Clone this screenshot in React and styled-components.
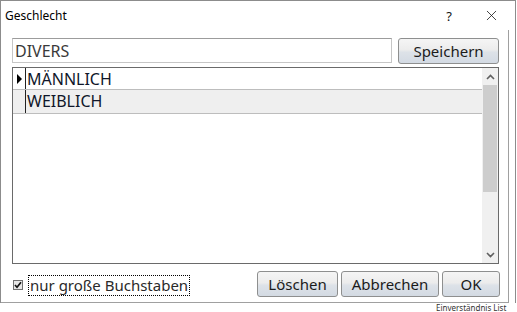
import React, {useState} from 'react';
import styled, {createGlobalStyle} from 'styled-components';
import {X} from 'lucide-react';

const GlobalStyle = createGlobalStyle`
  html, body {
    margin: 0;
    padding: 0;
    background: #ffffff;
    overflow: hidden;
  }
  body {
    font-family: "Noto Sans", "Open Sans", sans-serif;
  }
`

const items = ['MÄNNLICH', 'WEIBLICH'];

const App = () => {
    const [name, setName] = useState('DIVERS');
    const [upper, setUpper] = useState(true);
    const [current] = useState(0);

    return (
        <>
            <GlobalStyle/>
            <Desktop>
                <Window>
                    <TitleBar>
                        <Title>Geschlecht</Title>
                        <TitleButtons>
                            <Help>?</Help>
                            <Close><X size={17} strokeWidth={1.1}/></Close>
                        </TitleButtons>
                    </TitleBar>
                    <Body>
                        <InputRow>
                            <TextInput value={name} onChange={e => setName(e.target.value)}/>
                            <Button $width={101}>Speichern</Button>
                        </InputRow>
                        <ListBox>
                            <Rows>
                                {items.map((item, i) => (
                                    <Row key={item} $alt={i % 2 === 1}>
                                        <RowHeader>{i === current && <Pointer/>}</RowHeader>
                                        <Cell>{item}</Cell>
                                    </Row>
                                ))}
                            </Rows>
                            <ScrollBar>
                                <Arrow>
                                    <svg width="9" height="6" viewBox="0 0 9 6">
                                        <path d="M1 5 L4.5 1.5 L8 5" fill="none" stroke="#606060" strokeWidth="1.6"/>
                                    </svg>
                                </Arrow>
                                <Thumb/>
                                <Track/>
                                <Arrow>
                                    <svg width="9" height="6" viewBox="0 0 9 6">
                                        <path d="M1 1 L4.5 4.5 L8 1" fill="none" stroke="#606060" strokeWidth="1.6"/>
                                    </svg>
                                </Arrow>
                            </ScrollBar>
                        </ListBox>
                        <Footer>
                            <CheckLabel>
                                <CheckBox onClick={() => setUpper(!upper)}>
                                    {upper && (
                                        <svg width="8" height="8" viewBox="0 0 8 8">
                                            <path d="M1 4 L3 6.2 L7 1.2" fill="none" stroke="#111" strokeWidth="1.7"/>
                                        </svg>
                                    )}
                                </CheckBox>
                                <FocusText>nur große Buchstaben</FocusText>
                            </CheckLabel>
                            <ButtonGroup>
                                <Button $width={81}>Löschen</Button>
                                <Button $width={98}>Abbrechen</Button>
                                <Button $width={58}>OK</Button>
                            </ButtonGroup>
                        </Footer>
                    </Body>
                </Window>
                <Backdrop>Einverständnis List</Backdrop>
            </Desktop>
        </>
    );
};

const Desktop = styled.div`
  width: 517px;
  height: 312px;
  display: flex;
  flex-direction: column;
`
const Window = styled.div`
  flex-shrink: 0;
  width: 514px;
  height: 302px;
  border: 1px solid #8c8c8c;
  border-bottom: none;
  display: flex;
  flex-direction: column;
  background: #ffffff;
`
const TitleBar = styled.div`
  height: 29px;
  display: flex;
  align-items: center;
  justify-content: space-between;
  padding: 0 0 0 4px;
`
const Title = styled.div`
  font-size: 12px;
  color: #000;
  margin-top: -1px;
`
const TitleButtons = styled.div`
  display: flex;
  align-items: center;
`
const Help = styled.div`
  width: 40px;
  text-align: center;
  font-size: 13px;
  color: #111;
`
const Close = styled.div`
  width: 44px;
  display: flex;
  justify-content: center;
  color: #111;
  padding-right: 2px;
`
const Body = styled.div`
  flex: 1;
  margin-right: 6px;
  border-right: 1px solid #a0a0a0;
  border-bottom: 1px solid #a0a0a0;
  padding: 8px 9px 0 11px;
  display: flex;
  flex-direction: column;
`
const InputRow = styled.div`
  display: flex;
  gap: 6px;
  height: 25px;
`
const TextInput = styled.input`
  box-sizing: border-box;
  width: 380px;
  height: 25px;
  border: 1px solid #c6c6c6;
  border-top-color: #9c9c9c;
  padding: 0 2px;
  font-family: "Noto Sans", sans-serif;
  font-size: 16px;
  color: #3a3a3a;
  outline: none;
`
const Button = styled.button`
  box-sizing: border-box;
  width: ${(props) => props.$width}px;
  height: 26px;
  border: 1px solid #8e8f8f;
  border-radius: 3px;
  background: linear-gradient(#f5f5f5 0%, #ececec 45%, #dde2e8 55%, #d3dae3 100%);
  font-family: "Noto Sans", sans-serif;
  font-size: 15px;
  color: #1b1b1b;
  padding: 0;
`
const ListBox = styled.div`
  margin-top: 4px;
  width: 487px;
  height: 197px;
  box-sizing: border-box;
  border: 1px solid #6a6a6a;
  display: flex;
`
const Rows = styled.div`
  flex: 1;
  display: flex;
  flex-direction: column;
`
const Row = styled.div`
  height: 23px;
  display: flex;
  border-bottom: 1px solid #bdbdbd;
  background: ${(props) => (props.$alt ? '#efefef' : '#ffffff')};
  &:first-child {
    height: 21px;
  }
`
const RowHeader = styled.div`
  width: 12px;
  border-right: 1px solid #222;
  display: flex;
  align-items: center;
  justify-content: center;
`
const Pointer = styled.div`
  width: 0;
  height: 0;
  border-top: 5px solid transparent;
  border-bottom: 5px solid transparent;
  border-left: 5px solid #000;
  margin-left: 1px;
`
const Cell = styled.div`
  padding-left: 1px;
  font-size: 16px;
  line-height: 22px;
  color: #10172a;
`
const ScrollBar = styled.div`
  width: 16px;
  display: flex;
  flex-direction: column;
  background: #f0f0f0;
`
const Arrow = styled.div`
  height: 17px;
  display: flex;
  align-items: center;
  justify-content: center;
`
const Thumb = styled.div`
  height: 107px;
  margin: 0 1px;
  background: #cdcdcd;
`
const Track = styled.div`
  flex: 1;
`
const Footer = styled.div`
  flex: 1;
  display: flex;
  align-items: center;
  justify-content: space-between;
  padding-top: 1px;
`
const CheckLabel = styled.label`
  display: flex;
  align-items: center;
  gap: 5px;
  margin-left: 1px;
  margin-top: 3px;
`
const CheckBox = styled.span`
  box-sizing: border-box;
  width: 10px;
  height: 10px;
  border: 1px solid #707070;
  background: #e6e6e6;
  display: flex;
  align-items: center;
  justify-content: center;
`
const FocusText = styled.span`
  border: 1px dotted #000;
  padding: 0 1px;
  font-size: 15px;
  line-height: 19px;
  color: #2a2a2a;
`
const ButtonGroup = styled.div`
  display: flex;
  gap: 3px;
  margin-right: -1px;
`
const Backdrop = styled.div`
  margin-left: 436px;
  font-size: 8px;
  line-height: 9px;
  color: #333;
  white-space: nowrap;
`

export default App;
